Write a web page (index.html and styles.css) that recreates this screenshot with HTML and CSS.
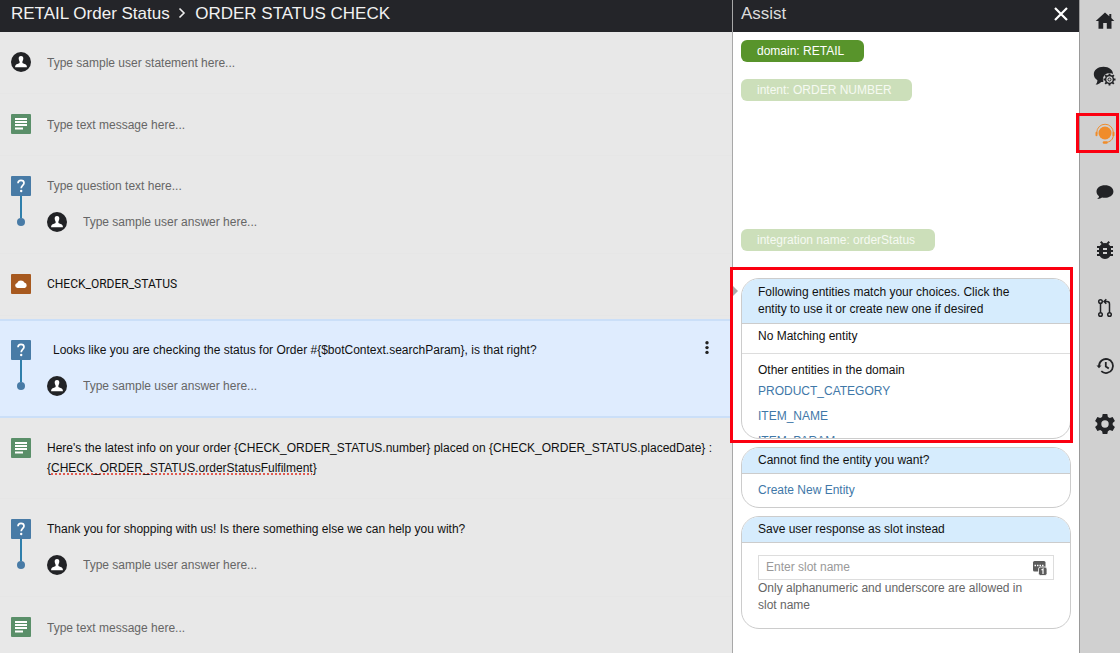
FILE: index.html
```html
<!DOCTYPE html>
<html lang="en">
<head>
<meta charset="utf-8">
<title>RETAIL Order Status</title>
<link rel="stylesheet" href="styles.css">
</head>
<body>
<svg class="defs" aria-hidden="true">
  <symbol id="user" viewBox="0 0 20 20"><circle cx="10" cy="10" r="10" fill="#222326"/><path d="M10 4c-1.700 0-2.500 1.200-2.300 2.800.1 1.300.6 2 .9 2.700v1.600c-1 .7-3.600 1.100-4.200 2.400-.2.500-.3 1-.3 1.700h11.800c0-.7-.1-1.200-.3-1.700-.6-1.300-3.200-1.700-4.200-2.400V9.500c.3-.7.800-1.400.9-2.700C12.500 5.200 11.700 4 10 4z" fill="#fff"/></symbol>
  <symbol id="text" viewBox="0 0 20 20"><rect width="20" height="20" rx="1" fill="#5a8f69"/><path d="M4 4h12v2H4zM4 7h12v2H4zM4 10h12v2H4zM4 13.500h8v2H4z" fill="#fff"/></symbol>
  <symbol id="question" viewBox="0 0 20 20"><rect width="20" height="20" rx="1" fill="#487ba6"/><path d="M7 7.200C7.100 5.300 8.200 4.400 10 4.400s3 1 3 2.600c0 2.300-2.800 2.500-2.800 5.200" fill="none" stroke="#fff" stroke-width="1.700"/><circle cx="10.200" cy="15" r="1.200" fill="#fff"/></symbol>
  <symbol id="cloud" viewBox="0 0 20 20"><rect width="20" height="20" rx="1" fill="#a7591f"/><path d="M6.500 14a2.600 2.600 0 0 1-.4-5.100A4.200 4.200 0 0 1 13.600 8.800 2.700 2.700 0 0 1 13.800 14z" fill="#fff"/></symbol>
</svg>
<div class="app">
  <main class="flow">
    <header class="bar"><h1 class="bar-title">RETAIL Order Status
      <svg class="crumb" viewBox="0 0 8 12" aria-hidden="true"><path d="M1.500 1.500 6 6 1.500 10.500" fill="none" stroke="#eee" stroke-width="1.600"/></svg>
      ORDER STATUS CHECK</h1></header>
    <section class="step">
      <svg class="icon"><use href="#user"/></svg>
      <input class="field" aria-label="User statement" placeholder="Type sample user statement here...">
    </section>
    <section class="step">
      <svg class="icon"><use href="#text"/></svg>
      <input class="field" aria-label="Text message" placeholder="Type text message here...">
    </section>
    <section class="step">
      <div class="track"><svg class="icon"><use href="#question"/></svg><i class="line"></i><i class="dot"></i></div>
      <div class="thread">
        <input class="field" aria-label="Question" placeholder="Type question text here...">
        <div class="answer"><svg class="icon"><use href="#user"/></svg><input class="field" aria-label="User answer" placeholder="Type sample user answer here..."></div>
      </div>
    </section>
    <section class="step">
      <svg class="icon"><use href="#cloud"/></svg>
      <p class="copy copy-code">CHECK_ORDER_STATUS</p>
    </section>
    <section class="step step-selected">
      <div class="track"><svg class="icon"><use href="#question"/></svg><i class="line"></i><i class="dot"></i></div>
      <div class="thread">
        <p class="copy copy-active">Looks like you are checking the status for Order #{$botContext.searchParam}, is that right?</p>
        <div class="answer"><svg class="icon"><use href="#user"/></svg><input class="field" aria-label="User answer" placeholder="Type sample user answer here..."></div>
      </div>
      <button class="more" aria-label="More actions"><svg class="icon" viewBox="0 0 20 20"><g fill="#222"><circle cx="10" cy="1.800" r="1.700"/><circle cx="10" cy="6.600" r="1.700"/><circle cx="10" cy="11.400" r="1.700"/></g></svg></button>
    </section>
    <section class="step">
      <svg class="icon"><use href="#text"/></svg>
      <p class="copy">Here's the latest info on your order {CHECK_ORDER_STATUS.number} placed on {CHECK_ORDER_STATUS.placedDate} :<br>{<span class="misspelt">CHECK_ORDER_STATUS.orderStatusFulfilment</span>}</p>
    </section>
    <section class="step">
      <div class="track"><svg class="icon"><use href="#question"/></svg><i class="line"></i><i class="dot"></i></div>
      <div class="thread">
        <p class="copy">Thank you for shopping with us! Is there something else we can help you with?</p>
        <div class="answer"><svg class="icon"><use href="#user"/></svg><input class="field" aria-label="User answer" placeholder="Type sample user answer here..."></div>
      </div>
    </section>
    <section class="step step-last">
      <svg class="icon"><use href="#text"/></svg>
      <input class="field" aria-label="Text message" placeholder="Type text message here...">
    </section>
  </main>

  <aside class="assist">
    <header class="bar"><h2 class="bar-title bar-light">Assist</h2>
      <button class="close" aria-label="Close"><svg viewBox="0 0 16 16" width="16" height="16"><path d="M2 2l12 12M14 2 2 14" stroke="#fff" stroke-width="2.200"/></svg></button></header>
    <div class="assist-body">
      <div class="pills">
        <button class="pill">domain: RETAIL</button>
        <button class="pill pill-faded">intent: ORDER NUMBER</button>
      </div>
      <button class="pill pill-faded">integration name: orderStatus</button>
      <div class="cards">
        <div class="highlight">
          <section class="card card-list">
            <h3 class="card-head card-head-wrap">Following entities match your choices. Click the entity to use it or create new one if desired</h3>
            <p class="none">No Matching entity</p>
            <div class="others">
              <p class="others-title">Other entities in the domain</p>
              <a class="link" href="#">PRODUCT_CATEGORY</a>
              <a class="link" href="#">ITEM_NAME</a>
              <a class="link" href="#">ITEM_PARAM</a>
            </div>
          </section>
        </div>
        <section class="card">
          <h3 class="card-head">Cannot find the entity you want?</h3>
          <div class="create"><a href="#">Create New Entity</a></div>
        </section>
        <section class="card">
          <h3 class="card-head"><label for="slot">Save user response as slot instead</label></h3>
          <div class="slot">
            <div class="slot-box">
              <input class="slot-input" id="slot" placeholder="Enter slot name">
              <svg viewBox="0 0 16 16" width="16" height="16" aria-hidden="true"><rect x="1" y="1" width="12.500" height="10.500" rx="1.500" fill="#5b5b5b"/><path d="M2.500 5.500h1.500M5 5.500h1.500M7.500 5.500H9M10 5.500h1.500" stroke="#fff" stroke-width="1.300"/><rect x="6.500" y="7" width="8.500" height="8.500" rx="2" fill="#5b5b5b" stroke="#fff" stroke-width=".8"/><path d="M9.500 10l1.500-1v5" fill="none" stroke="#fff" stroke-width="1.200"/></svg>
            </div>
            <p class="hint">Only alphanumeric and underscore are allowed in slot name</p>
          </div>
        </section>
      </div>
    </div>
  </aside>

  <nav class="rail" aria-label="Tools">
    <button class="tool" aria-label="Home"><svg viewBox="0 0 24 24"><path d="M12 6.500 2.700 15h2.800v7.700h4.700v-5.600h3.600v5.600h4.700V15h2.800L18.300 12V8h-2v2.300z"/></svg></button>
    <button class="tool" aria-label="Dialog settings"><svg viewBox="0 0 24 24"><path d="M10.500 2.800C4.800 2.800.8 6 .8 10.300c0 2.600 1.400 4.600 3.600 5.900 0 1.800-.7 3.200-1.800 4.400 2.500-.2 4.300-1.200 5.500-2.700 5.500.9 12-2 12-7.600 0-4.300-4-7.500-9.600-7.500z"/><circle cx="16.500" cy="15.500" r="6.600" fill="#d0d0d0"/><circle cx="16.500" cy="15.500" r="3.900" fill="none" stroke="#222326" stroke-width="1.500"/><circle cx="16.500" cy="15.500" r="1.500" fill="none" stroke="#222326"/><path d="M16.500 9.500v2M16.500 19.500v2M10.500 15.500h2M20.500 15.500h2M12.200 11.200l1.500 1.500M19.300 18.300l1.500 1.500M12.200 19.800l1.500-1.500M19.300 12.700l1.500-1.500" stroke="#222326" stroke-width="1.900"/></svg></button>
    <button class="tool tool-active" aria-label="Assist" aria-current="true"><svg viewBox="0 0 24 24" fill="#f08c2a"><circle cx="12" cy="11" r="6.500"/><path d="M3.800 12V10.500a8.200 8.200 0 0 1 16.500 0V13c0 4.500-3 7-7.800 7.500" fill="none" stroke="#f08c2a" stroke-width="1"/><rect x="2.500" y="9.800" width="2" height="4.500" rx="1"/><rect x="19.500" y="9.800" width="2" height="4.500" rx="1"/><rect x="9.700" y="19.200" width="5" height="2.600" rx="1.300"/></svg></button>
    <button class="tool" aria-label="Chat"><svg viewBox="0 0 24 24"><path d="M12 5.300c-4.900 0-8.500 2.700-8.500 6.200 0 2 1 3.700 2.500 4.800 0 1-.6 1.900-1.800 2.700 2 .1 3.600-.4 4.900-1.400 5.600 1 11.300-1.500 11.300-6.100 0-3.500-3.500-6.200-8.400-6.200z"/></svg></button>
    <button class="tool" aria-label="Debug"><svg viewBox="0 0 24 24"><path d="M20 8h-2.810c-.45-.78-1.070-1.450-1.820-1.960L17 4.410 15.590 3l-2.170 2.170a6 6 0 0 0-2.840 0L8.410 3 7 4.410l1.620 1.630C7.880 6.550 7.260 7.220 6.810 8H4v2h2.090c-.05.33-.09.66-.09 1v1H4v2h2v1c0 .34.040.67.090 1H4v2h2.810a6 6 0 0 0 10.380 0H20v-2h-2.090c.05-.33.09-.66.090-1v-1h2v-2h-2v-1c0-.34-.04-.67-.09-1H20V8zm-6 8h-4v-2h4v2zm0-4h-4v-2h4v2z"/></svg></button>
    <button class="tool" aria-label="Versions"><svg viewBox="0 0 24 24" fill="none" stroke="#222326" stroke-width="1.500"><circle cx="7.500" cy="5.500" r="1.800"/><circle cx="7.500" cy="18.500" r="1.800"/><circle cx="16.500" cy="18.500" r="1.800"/><path d="M7.500 7.300v9.400M16.500 16.700V8q0-2.500-2.500-2.500h-3M13.300 3.200 11 5.500l2.300 2.300"/></svg></button>
    <button class="tool" aria-label="History"><svg viewBox="0 0 24 24" fill="none" stroke="#222326" stroke-width="1.800"><path d="M6 12a7 7 0 1 1 2.300 5.200M12.800 8v4.500l3 2"/><path d="M3.500 11.500h5L6 14.300z" fill="#222326" stroke="none"/></svg></button>
    <button class="tool" aria-label="Settings"><svg viewBox="0 0 24 24"><path fill-rule="evenodd" d="M9.700 2h4.600l.6 2.900 1.900 1.100 2.800-1 2.300 4-2.200 2v2.100l2.200 2-2.300 4-2.800-1-1.900 1.100-.6 2.900H9.700l-.6-2.900L7.200 18.100l-2.800 1-2.300-4 2.200-2V11l-2.200-2 2.300-4 2.800 1 1.900-1.100zM12 8.300a3.700 3.700 0 1 0 0 7.400 3.700 3.700 0 0 0 0-7.400z"/></svg></button>
  </nav>
</div>
</body>
</html>
```

FILE: styles.css
```css
* { box-sizing: border-box; }
body { margin: 0; background: #fff; color: #111; font: 12px/20px "Liberation Sans", Arial, sans-serif; }
h1, h2, h3, p { margin: 0; font-weight: 400; }
h3 { font-size: 12px; }
button, input { font: inherit; color: inherit; border: 0; padding: 0; background: none; }
button { cursor: pointer; }
a { color: #3f78a8; text-decoration: none; }
.defs { position: absolute; width: 0; height: 0; }
.app { display: grid; grid-template-columns: 1fr 347px 41px; min-height: 100vh; }

.bar { display: flex; justify-content: space-between; height: 32px; padding: 4px 8px 0 11px; background: #242529; color: #f2f2f2; }
.bar-title { font-size: 17px; line-height: 20px; }
.bar-light { color: #dcdcdc; }
.crumb { width: 8px; height: 12px; margin: 0 4px; }
.icon { display: block; flex: none; width: 20px; height: 20px; }

.flow { min-width: 0; background: #e8e8e8; }
.step { display: flex; gap: 16px; padding: 20px 15px 20px 11px; border-bottom: 1px solid #e6e6e6; }
.step > * { min-height: 21px; }
.step > .icon { height: 21px; padding-bottom: 1px; }
.step-selected { margin-top: 3px; padding: 19px 15px 19px 11px; background: #dfecfe; border: solid #cbdff8; border-width: 2px 0; }
.step-last { border-bottom: 0; }
.track { display: flex; flex-direction: column; align-items: center; width: 20px; }
.line { width: 2px; height: 22px; background: #2f7fab; }
.dot { width: 8px; height: 8px; border-radius: 50%; background: #487ba6; }
.thread { display: flex; flex: 1; flex-direction: column; gap: 16px; min-width: 0; }
.answer { display: flex; gap: 16px; height: 21px; }
.field { flex: 1; min-width: 0; height: 20px; outline: 0; }
.thread > .field { flex: none; }
.field::placeholder { color: #666; opacity: 1; }
.copy { flex: 1; min-width: 0; line-height: 20px; }
.thread > .copy { flex: none; }
.copy-code { font-family: Roboto, sans-serif; }
.copy-active { padding-left: 6px; }
.misspelt { text-decoration: underline dotted #e05a50 2px; text-underline-offset: 1px; text-decoration-skip-ink: none; }
.more { align-self: flex-start; }

.assist { display: flex; flex-direction: column; border-left: 1px solid #a8a8a8; background: #fff; }
.assist .bar { padding-left: 8px; }
.close { display: flex; align-items: center; width: 18px; height: 20px; }
.assist-body { padding: 8px; }
.pill { display: block; height: 22px; padding: 0 20px 0 16px; border-radius: 6px; background: #58942b; color: #fff; }
.pill-faded { background: #ccdfba; color: #f6faf2; }
.pills { display: flex; flex-direction: column; align-items: flex-start; gap: 17px; padding-bottom: 128px; }
.cards { display: flex; flex-direction: column; gap: 8px; padding-top: 27px; }
.card { overflow: hidden; border: 1px solid #ccc; border-radius: 18px; background: #fff; line-height: 17px; }
.card-list { height: 161px; }
.card-head { padding: 4px 16px; border-bottom: 1px solid #ccc; background: #d6ecfd; }
.card-head-wrap { padding: 5px 40px 5px 16px; }
.none { padding: 4px 16px 8px; border-bottom: 1px solid #ddd; }
.others { padding: 8px 16px; }
.others-title { padding-bottom: 4px; }
.link { display: block; padding-bottom: 8px; }
.create { padding: 8px 16px; }
.slot { padding: 12px 16px 14px; }
.slot-box { display: flex; align-items: center; height: 25px; padding: 0 5px 0 7px; border: 1px solid #ddd; }
.slot-input { flex: 1; min-width: 0; outline: 0; }
.slot-input::placeholder { color: #999; opacity: 1; }
.hint { padding-right: 20px; color: #666; }

.highlight { position: relative; }
.highlight::before { content: ""; position: absolute; left: -8px; top: 8px; border: 5px solid transparent; border-width: 5px 0 5px 5px; border-left-color: #aaa; }
.highlight::after { content: ""; position: absolute; inset: -11px -2px -4px -11px; border: 3px solid #fb0010; pointer-events: none; }

.rail { display: flex; flex-direction: column; align-items: flex-end; gap: 34px; padding: 6px 3px 6px 0; border-left: 1px solid #999; background: #d0d0d0; }
.tool { position: relative; width: 24px; height: 24px; fill: #222326; }
.tool svg { display: block; width: 24px; height: 24px; }
.tool-active::after { content: ""; position: absolute; inset: -9px -2px -7px -17px; border: 3px solid #fb0010; pointer-events: none; }
```
